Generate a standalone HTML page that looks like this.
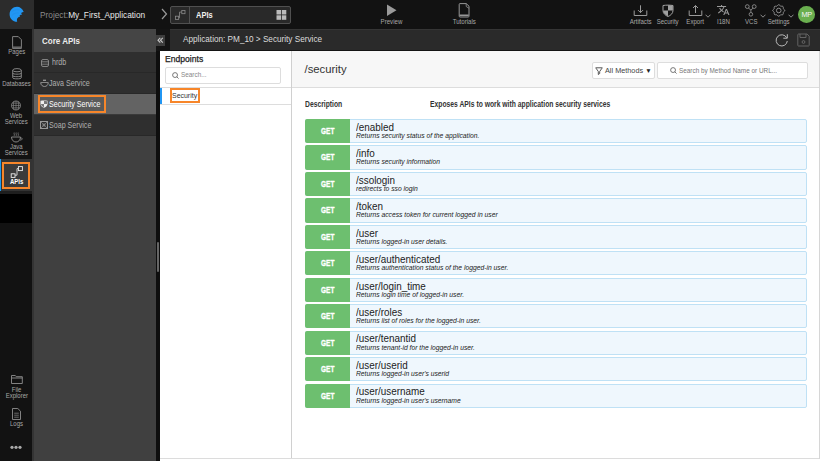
<!DOCTYPE html>
<html><head><meta charset="utf-8">
<style>
*{margin:0;padding:0;box-sizing:border-box}
html,body{width:820px;height:461px;overflow:hidden;background:#fff;font-family:"Liberation Sans",sans-serif}
.a{position:absolute}
#top{left:0;top:0;width:820px;height:29px;background:#121212}
#logo{left:0;top:0;width:34px;height:29px;background:#2c2c2c}
#side{left:0;top:29px;width:32px;height:432px;background:#121212}
.si{position:absolute;left:0.4px;width:32px;text-align:center;color:#a8a8a8;font-size:6.9px;line-height:6px}
#core{left:34px;top:29px;width:122px;height:432px;background:#404040}
#coreh{left:0;top:0;width:122px;height:22.5px;background:#454545;color:#ececec;font-weight:bold;font-size:9.2px;line-height:24px;padding-left:7.5px}
.row{position:absolute;left:0;width:122px;height:21px;background:#2f2f2f;border-bottom:1px solid #282828;color:#b0b0b0;font-size:8.2px;line-height:21px;padding-left:15px}
.row .c,.srow .c{transform:scaleX(.87)}
.row svg{position:absolute;left:6px;top:6px}
#strip{left:156px;top:29px;width:4px;height:432px;background:#0e0e0e}
#hdr{left:160px;top:29px;width:660px;height:22px;background:#2a2a2a;border-top:1px solid #353535;border-bottom:1px solid #141414}
#main{left:160px;top:51px;width:660px;height:410px;background:#fff}
.get{position:absolute;left:304.6px;width:502.7px;height:24.2px;background:#eff7fd;border:1px solid #bfe1f5;border-radius:2px}
.get .m{position:absolute;left:-1px;padding-left:1px;top:-1px;width:45.6px;height:24.2px;background:#6dbf6f;border-radius:2px 0 0 2px;color:#fff;font-weight:bold;font-size:8.5px;line-height:25px;text-align:center}
.get .m .cc{transform:scaleX(.76);-webkit-text-stroke:0.35px #fff}
.get .p{position:absolute;left:50.4px;top:1.8px;font-size:10.6px;line-height:11px;color:#222;transform:scaleX(.934);transform-origin:0 0;white-space:nowrap}
.get .d{position:absolute;left:50.4px;top:12px;font-size:7.75px;line-height:8px;color:#222;font-style:italic;transform:scaleX(.87);transform-origin:0 0;white-space:nowrap}
.c{display:inline-block;transform:scaleX(.87);transform-origin:0 0;white-space:nowrap}
.cc{display:inline-block;transform:scaleX(.87);transform-origin:50% 0;white-space:nowrap}
.lbl{color:#a8a8a8;font-size:7px;text-align:center;position:absolute;line-height:6px}
</style></head><body>
<div id="top" class="a"></div>
<div id="logo" class="a">
<svg class="a" style="left:4px;top:2px" width="26" height="24" viewBox="4 2 26 24"><path d="M23.7,12C22.5,8.8 20,6.8 17,6.8C13,6.8 9.6,10 9.6,14.2C9.6,18.3 12.6,21.8 17.2,21.8C16.8,20.5 16.8,19.2 17.4,18.3C18.2,17.4 19.2,16.8 20.2,16.6C19.9,16.2 19.7,15.8 19.6,15.5C20.3,14.8 21.2,14.5 22.2,14.4C21.7,13.9 21.3,13.4 21.1,12.9C21.9,12.3 22.8,12 23.7,12Z" fill="#2196f3"/><path d="M11.5,12C13.5,10 16.5,9.3 19.5,10M11.8,15.5C13.8,13.3 16.3,12.6 18.8,13" stroke="#1a80dc" stroke-width="0.5" fill="none" opacity="0.6"/></svg>
</div>
<div class="a" style="left:40px;top:10px;font-size:8.3px;line-height:10px;color:#8a8a8a;white-space:nowrap">Project:<span style="color:#e8e8e8">My_First_Application</span></div>
<svg class="a" style="left:160px;top:8px" width="8" height="12" viewBox="0 0 8 12"><path d="M2 1L6.5 6L2 11" stroke="#9a9a9a" stroke-width="1.2" fill="none"/></svg>
<div class="a" style="left:170px;top:6px;width:121px;height:18px;background:#292929;border:1px solid #505050;border-radius:2px"></div>
<div class="a" style="left:189px;top:7px;width:1px;height:16px;background:#505050"></div>
<svg class="a" style="left:175px;top:10px" width="11" height="10" viewBox="0 0 11 10"><rect x="6.8" y="0.5" width="3.2" height="3.2" fill="none" stroke="#8a8a8a" stroke-width="0.8"/><rect x="0.5" y="6.2" width="3.2" height="3.2" fill="none" stroke="#8a8a8a" stroke-width="0.8"/><path d="M3.7 7.8H4.5V2.1H6.8" stroke="#8a8a8a" fill="none" stroke-width="0.8"/></svg>
<div class="a" style="left:195.6px;top:9.5px;font-size:8.6px;line-height:10px;font-weight:bold;color:#f0f0f0"><span class="c">APIs</span></div>
<svg class="a" style="left:276px;top:10px" width="11" height="10" viewBox="0 0 11 10"><rect x="0.5" y="0" width="4.5" height="4.5" fill="#bbb"/><rect x="5.8" y="0" width="4.5" height="4.5" fill="#bbb"/><rect x="0.5" y="5.3" width="4.5" height="4.5" fill="#bbb"/><rect x="5.8" y="5.3" width="4.5" height="4.5" fill="#bbb"/></svg>

<!-- preview / tutorials -->
<svg class="a" style="left:386px;top:4px" width="11" height="13" viewBox="0 0 11 13"><path d="M1 0.5L10.5 6.3L1 12Z" fill="#9a9a9a"/></svg>
<div class="lbl" style="left:371.3px;top:18.8px;width:40px"><span class="cc">Preview</span></div>
<svg class="a" style="left:455px;top:3.2px" width="18" height="16" viewBox="455 2 18 16"><path d="M460 2.6H466.2L469 5.2V15.2Q469 16 468.2 16H460Q459.2 16 459.2 15.2V3.4Q459.2 2.6 460 2.6Z" fill="none" stroke="#979797" stroke-width="1"/><path d="M466.2 2.6V5.5L468.8 7.2" fill="none" stroke="#979797" stroke-width="0.8"/><path d="M459.5 14.3H468.7" stroke="#979797" stroke-width="1.6"/></svg>
<div class="lbl" style="left:444px;top:18.8px;width:40px"><span class="cc">Tutorials</span></div>

<!-- right toolbar -->
<svg class="a" style="left:633px;top:4px" width="15" height="13" viewBox="0 0 15 13"><path d="M1.2 6.5V11.5H13.8V6.5" fill="none" stroke="#9a9a9a" stroke-width="1"/><path d="M7.5 1.3V8.6M5 6.1L7.5 8.6L10 6.1" fill="none" stroke="#9a9a9a" stroke-width="1"/></svg>
<div class="lbl" style="left:620px;top:18.8px;width:41px"><span class="cc">Artifacts</span></div>
<svg class="a" style="left:662px;top:4px" width="12" height="13" viewBox="0 0 12 13"><path d="M1 1.5C4 1 8 1 11 1.5V6.5C11 9.5 8.5 11.5 6 12.5 3.5 11.5 1 9.5 1 6.5Z" fill="none" stroke="#a0a0a0" stroke-width="1"/><path d="M6 1.2V6.5H1.2V6.8C1.3 9 3 10.8 6 12.2V6.5H10.8V1.6C9 1.3 7.5 1.2 6 1.2Z" fill="#a0a0a0"/></svg>
<div class="lbl" style="left:648px;top:18.8px;width:40px"><span class="cc">Security</span></div>
<svg class="a" style="left:688px;top:4px" width="15" height="13" viewBox="0 0 15 13"><path d="M1.2 6.5V11.5H13.8V6.5" fill="none" stroke="#9a9a9a" stroke-width="1"/><path d="M7.5 9V1.5M5 4L7.5 1.5L10 4" fill="none" stroke="#9a9a9a" stroke-width="1"/></svg>
<div class="lbl" style="left:675px;top:18.8px;width:41px"><span class="cc">Export</span></div>
<svg class="a" style="left:704.5px;top:14px" width="6" height="4" viewBox="0 0 6 4"><path d="M0.5 0.7L3 3.2L5.5 0.7" fill="none" stroke="#9a9a9a" stroke-width="0.9"/></svg>
<svg class="a" style="left:717px;top:5.3px" width="12.5" height="10" viewBox="1 2 22 20" preserveAspectRatio="none"><path d="M12.87 15.07l-2.54-2.51.03-.03c1.74-1.94 2.98-4.17 3.710-6.53H17V4h-7V2H8v2H1v1.99h11.17C11.5 7.92 10.44 9.75 9 11.35 8.07 10.320 7.3 9.19 6.69 8h-2c.73 1.63 1.73 3.17 2.98 4.56l-5.09 5.02L4 19l5-5 3.11 3.11.76-2.04zM18.5 10h-2L12 22h2l1.12-3h4.75L21 22h2l-4.5-12zm-2.62 7l1.620-4.33L19.12 17h-3.24z" fill="#9a9a9a"/></svg>
<div class="lbl" style="left:703px;top:18.8px;width:40px"><span class="cc">I18N</span></div>
<svg class="a" style="left:742px;top:2px" width="16" height="16" viewBox="742 2 16 16"><circle cx="747.3" cy="6.6" r="1.9" fill="none" stroke="#9a9a9a" stroke-width="0.8"/><circle cx="754.2" cy="6.6" r="1.9" fill="none" stroke="#9a9a9a" stroke-width="0.8"/><circle cx="750.9" cy="14.3" r="1.8" fill="none" stroke="#9a9a9a" stroke-width="0.8"/><path d="M748.4 8.2L750.9 9.9L753.1 8.2M750.9 9.9V12.5" fill="none" stroke="#9a9a9a" stroke-width="0.8"/></svg>
<div class="lbl" style="left:731px;top:18.8px;width:40px"><span class="cc">VCS</span></div>
<svg class="a" style="left:759.5px;top:14px" width="6" height="4" viewBox="0 0 6 4"><path d="M0.5 0.7L3 3.2L5.5 0.7" fill="none" stroke="#9a9a9a" stroke-width="0.9"/></svg>
<svg class="a" style="left:772px;top:4px" width="13.5" height="13" viewBox="0 0 13.5 13"><path d="M6.75 0.7C7.7 0.7 8.2 2 8.6 2.2 9 2.4 10.4 1.9 11 2.5 11.6 3.1 11.1 4.4 11.3 4.8 11.5 5.2 12.8 5.6 12.8 6.5 12.8 7.4 11.5 7.8 11.3 8.2 11.1 8.6 11.6 9.9 11 10.5 10.4 11.1 9 10.6 8.6 10.8 8.2 11 7.7 12.3 6.75 12.3 5.8 12.3 5.3 11 4.9 10.8 4.5 10.6 3.1 11.1 2.5 10.5 1.9 9.9 2.4 8.6 2.2 8.2 2 7.8 0.7 7.4 0.7 6.5 0.7 5.6 2 5.2 2.2 4.8 2.4 4.4 1.9 3.1 2.5 2.5 3.1 1.9 4.5 2.4 4.9 2.2 5.3 2 5.8 0.7 6.75 0.7Z" fill="none" stroke="#9a9a9a" stroke-width="0.9"/><circle cx="6.75" cy="6.5" r="2.3" fill="none" stroke="#9a9a9a" stroke-width="0.9"/></svg>
<div class="lbl" style="left:759px;top:18.8px;width:40px"><span class="cc">Settings</span></div>
<svg class="a" style="left:787.5px;top:14px" width="6" height="4" viewBox="0 0 6 4"><path d="M0.5 0.7L3 3.2L5.5 0.7" fill="none" stroke="#9a9a9a" stroke-width="0.9"/></svg>
<div class="a" style="left:798.2px;top:6.3px;width:16.6px;height:16.6px;border-radius:50%;background:#6aaf4f;color:#f4f4f4;font-size:8px;line-height:18.6px;text-align:center;letter-spacing:-0.3px"><span class="cc" style="transform:scaleX(.92)">MP</span></div>

<!-- left sidebar -->
<div id="side" class="a">
</div>
<svg class="a" style="left:12px;top:35.5px" width="10" height="13" viewBox="0 0 10 13"><path d="M0.6 0.6H6.3L9.4 3.7V12.4H0.6Z" fill="none" stroke="#8e8e8e" stroke-width="0.9"/><path d="M0.6 11.2H9.4" stroke="#666" stroke-width="1.6"/></svg>
<div class="si" style="top:49px"><span class="cc">Pages</span></div>
<svg class="a" style="left:12px;top:68px" width="10" height="12" viewBox="0 0 10 12"><ellipse cx="5" cy="2.2" rx="4.3" ry="1.6" fill="none" stroke="#8e8e8e" stroke-width="0.9"/><path d="M0.7 2.2V9.8C0.7 11.2 9.3 11.2 9.3 9.8V2.2M0.7 5.2C0.7 6.5 9.3 6.5 9.3 5.2M0.7 7.7C0.7 9 9.3 9 9.3 7.7" fill="none" stroke="#8e8e8e" stroke-width="0.9"/></svg>
<div class="si" style="top:81px"><span class="cc">Databases</span></div>
<svg class="a" style="left:10.5px;top:100px" width="10" height="11" viewBox="0 0 10 11"><circle cx="5" cy="5.5" r="4.5" fill="none" stroke="#8e8e8e" stroke-width="0.8"/><path d="M0.6 5.5H9.4M1.2 3.2H8.8M1.2 7.8H8.8M5 1V10M3 1.4C2.2 4 2.2 7 3 9.6M7 1.4C7.8 4 7.8 7 7 9.6" fill="none" stroke="#8e8e8e" stroke-width="0.6"/></svg>
<div class="si" style="top:112.8px"><span class="cc">Web</span><br><span class="cc">Services</span></div>
<svg class="a" style="left:11px;top:132px" width="12" height="11" viewBox="0 0 12 11"><path d="M3.2 0.5C2.6 1.5 3.8 2.5 3.2 3.8M5.2 0.5C4.6 1.5 5.8 2.5 5.2 3.8M7.2 0.5C6.6 1.5 7.8 2.5 7.2 3.8" fill="none" stroke="#8e8e8e" stroke-width="0.7"/><path d="M0.5 5H9.5C9.5 8 7.5 10 5 10S0.5 8 0.5 5Z" fill="none" stroke="#8e8e8e" stroke-width="0.9"/><path d="M9.3 6H10.6C11.5 6 11.5 8.2 9.2 8.2" fill="none" stroke="#8e8e8e" stroke-width="0.8"/></svg>
<div class="si" style="top:143.8px"><span class="cc">Java</span><br><span class="cc">Services</span></div>
<div class="a" style="left:0;top:159px;width:32px;height:32px;background:#333"></div><div class="a" style="left:0;top:191px;width:32px;height:3px;background:#1e1e1e"></div>
<div class="a" style="left:0;top:159px;width:1.2px;height:32px;background:#1e9cf0"></div>
<div class="a" style="left:2px;top:161.5px;width:28px;height:27.5px;border:2px solid #f7862a;background:#3b3b3b"></div>
<svg class="a" style="left:10px;top:166px" width="13" height="12" viewBox="0 0 13 12"><rect x="8.4" y="0.6" width="4" height="4" fill="none" stroke="#eee" stroke-width="0.9"/><rect x="1.2" y="7.8" width="3.8" height="3.6" fill="none" stroke="#eee" stroke-width="0.9"/><path d="M5 9.2H7V2.6H8.4" fill="none" stroke="#eee" stroke-width="0.8"/></svg>
<div class="si" style="top:178.8px;color:#fff;font-weight:bold;font-size:6.9px"><span class="cc">APIs</span></div>
<div class="a" style="left:0;top:194px;width:33px;height:29px;background:#000"></div>
<svg class="a" style="left:10.5px;top:375px" width="12" height="9" viewBox="0 0 12 9"><path d="M0.5 0.5H4.3L5.3 1.7H11.3V8.5H0.5Z M0.5 3H11.3" fill="none" stroke="#8e8e8e" stroke-width="0.9"/></svg>
<div class="si" style="top:386.6px"><span class="cc">File</span><br><span class="cc">Explorer</span></div>
<svg class="a" style="left:12px;top:407.5px" width="9" height="12" viewBox="0 0 9 12"><path d="M0.5 0.5H5.8L8.5 3.2V11.5H0.5Z" fill="none" stroke="#8e8e8e" stroke-width="0.9"/><path d="M2.2 5.2H6.8M2.2 7.2H6.8M2.2 9.2H6.8" stroke="#8e8e8e" stroke-width="0.7"/></svg>
<div class="si" style="top:421px"><span class="cc">Logs</span></div>
<svg class="a" style="left:10px;top:445px" width="12" height="5" viewBox="0 0 12 5"><circle cx="2" cy="2.3" r="1.6" fill="#aaa"/><circle cx="6" cy="2.3" r="1.6" fill="#aaa"/><circle cx="10" cy="2.3" r="1.6" fill="#aaa"/></svg>
<div class="a" style="left:32px;top:29px;width:2px;height:432px;background:#343434"></div>

<!-- core apis panel -->
<div id="core" class="a">
 <div id="coreh" class="a"><span class="c">Core APIs</span></div>
 <div class="row" style="top:22.5px;padding-left:17.5px">
  <svg width="8" height="8" viewBox="0 0 8 8" style="left:7px;top:7px"><rect x="0.5" y="0.5" width="7" height="7" rx="1.5" fill="none" stroke="#999" stroke-width="0.8"/><path d="M0.5 2.8H7.5M0.5 5.2H7.5" stroke="#999" stroke-width="0.7"/></svg><span class="c">hrdb</span></div>
 <div class="row" style="top:43.5px">
  <svg width="9" height="8" viewBox="0 0 9 8" style="left:5.5px;top:6.8px"><path d="M3 1.3H6" fill="none" stroke="#9a9a9a" stroke-width="1.3"/><path d="M0.7 3.6H8.3C8.3 6 6.5 7.5 4.5 7.5S0.7 6 0.7 3.6Z" fill="none" stroke="#9a9a9a" stroke-width="0.9"/><path d="M2.6 4.8H6.4" stroke="#222" stroke-width="0.9"/></svg><span class="c">Java Service</span></div>
 <div class="row" style="top:64.5px;background:#636363;border-bottom-color:#3a3a3a;color:#fff"></div>
 <div class="a" style="left:4px;top:66px;width:68px;height:17.5px;border:2px solid #f7862a;background:#5a5a5a"></div>
 <svg class="a" style="left:6px;top:71px" width="8" height="8" viewBox="0 0 8 8"><path d="M0.5 0.8C3 0.3 5 0.3 7.5 0.8V4C7.5 6 5.5 7.2 4 7.7 2.5 7.2 0.5 6 0.5 4Z" fill="#eee"/><path d="M4 1V4H1V4.3C1.3 5.8 2.5 6.8 4 7.2V4H7V1.2C6 1 5 1 4 1Z" fill="#777"/></svg>
 <div class="a srow" style="left:15px;top:64.5px;height:21px;line-height:21px;font-size:8.2px;color:#fff"><span class="c">Security Service</span></div>
 <div class="row" style="top:85.5px">
  <svg width="8" height="8" viewBox="0 0 8 8"><rect x="0.5" y="0.5" width="7" height="7" fill="none" stroke="#999"/><path d="M0.5 0.5L7.5 7.5M7.5 0.5L0.5 7.5M2 4H6M4 2V6" stroke="#999" stroke-width="0.6"/></svg><span class="c">Soap Service</span></div>
</div>
<div id="strip" class="a"></div>
<div class="a" style="left:156px;top:35px;width:9px;height:10.8px;background:#3d3d3d;z-index:5"></div>
<svg class="a" style="left:157px;top:37px;z-index:6" width="7" height="7" viewBox="0 0 7 7"><path d="M3.3 0.8L1 3.2L3.3 5.6M5.8 0.8L3.5 3.2L5.8 5.6" fill="none" stroke="#c8c8c8" stroke-width="1.1"/></svg>
<div class="a" style="left:156.5px;top:242px;width:2.5px;height:30px;background:#666;border-radius:1px"></div>

<!-- header bar -->
<div id="hdr" class="a"></div>
<div class="a" style="left:156px;top:29px;width:14px;height:22px;background:#141414"></div>
<div class="a" style="left:183px;top:34px;font-size:8.2px;line-height:11px;color:#dcdcdc;white-space:nowrap">Application: PM_10 &gt; Security Service</div>
<svg class="a" style="left:775px;top:33px" width="14" height="14" viewBox="0 0 14 14"><path d="M11.6 4.6A5.6 5.6 0 1 0 12.3 8" fill="none" stroke="#c8c8c8" stroke-width="0.9"/><path d="M12.3 1.2V5.2H8.3" fill="none" stroke="#c8c8c8" stroke-width="0.9"/></svg>
<svg class="a" style="left:797px;top:33px" width="13" height="14" viewBox="0 0 13 14"><path d="M1.5 1H10L12.2 3.2V12.3Q12.2 13 11.5 13H1.5Q0.8 13 0.8 12.3V1.7Q0.8 1 1.5 1Z" fill="none" stroke="#6a6a6a" stroke-width="0.9"/><path d="M3 1V4.5H9V1" fill="none" stroke="#6a6a6a" stroke-width="0.9"/><circle cx="6.5" cy="9" r="1.4" fill="none" stroke="#6a6a6a" stroke-width="0.9"/></svg>

<!-- main white -->
<div id="main" class="a"></div>
<div class="a" style="left:160px;top:87px;width:131px;height:1px;background:#ddd"></div>
<div class="a" style="left:165px;top:54px;font-size:8.6px;line-height:11px;color:#222;-webkit-text-stroke:0.25px #222">Endpoints</div>
<div class="a" style="left:165px;top:66.5px;width:115.5px;height:17px;border:1px solid #ddd;border-radius:2px"></div>
<svg class="a" style="left:171.5px;top:71.5px" width="7" height="7" viewBox="0 0 8 8"><circle cx="3.5" cy="3.5" r="2.8" fill="none" stroke="#555" stroke-width="0.9"/><path d="M5.5 5.5L7.5 7.5" stroke="#555" stroke-width="0.9"/></svg>
<div class="a" style="left:181px;top:70px;font-size:6.4px;line-height:9px;color:#888">Search...</div>
<div class="a" style="left:160px;top:104px;width:131px;height:1px;background:#ddd"></div>
<div class="a" style="left:160px;top:88px;width:1.5px;height:16px;background:#2196f3"></div>
<div class="a" style="left:170.2px;top:88.2px;width:29.6px;height:14.8px;border:2px solid #f7862a"></div>
<div class="a" style="left:171.8px;top:90.6px;font-size:8.1px;line-height:9px;color:#333"><span class="c" style="transform:scaleX(.86)">Security</span></div>
<div class="a" style="left:291px;top:51px;width:1px;height:407px;background:#d0d0d0"></div>
<div class="a" style="left:160px;top:458px;width:660px;height:1px;background:#dcdcdc"></div>
<div class="a" style="left:819px;top:51px;width:1px;height:408px;background:#d6d6d6"></div>

<div class="a" style="left:292px;top:51px;width:527px;height:37px;background:#f7f7f7;border-bottom:1px solid #ddd"></div>
<div class="a" style="left:304.5px;top:62px;font-size:11.3px;line-height:14px;color:#333">/security</div>
<div class="a" style="left:592px;top:62px;width:62.5px;height:16.5px;border:1px solid #ddd;border-radius:2px;background:#fff"></div>
<svg class="a" style="left:595px;top:67px" width="8" height="8" viewBox="0 0 8 8"><path d="M0.5 0.8H7.5M1 1.2L3.3 4.5V7.5L4.7 6.5V4.5L7 1.2" fill="none" stroke="#444" stroke-width="0.9"/></svg>
<div class="a" style="left:605px;top:66px;font-size:7.3px;line-height:9px;color:#444;white-space:nowrap">All Methods <span style="font-size:6.5px;color:#222">▼</span></div>
<div class="a" style="left:657px;top:62px;width:150.5px;height:17px;border:1px solid #ddd;border-radius:2px;background:#fff"></div>
<svg class="a" style="left:670px;top:67px" width="7" height="7" viewBox="0 0 8 8"><circle cx="3.5" cy="3.5" r="2.8" fill="none" stroke="#555" stroke-width="0.9"/><path d="M5.5 5.5L7.5 7.5" stroke="#555" stroke-width="0.9"/></svg>
<div class="a" style="left:679px;top:66px;font-size:6.4px;line-height:9px;color:#777;white-space:nowrap">Search by Method Name or URL...</div>

<div class="a" style="left:305px;top:100px;font-size:8.4px;line-height:9px;color:#333;font-weight:bold"><span class="c" style="transform:scaleX(.808)">Description</span></div>
<div class="a" style="left:430px;top:100px;font-size:8.4px;line-height:9px;color:#333;font-weight:bold;white-space:nowrap"><span class="c" style="transform:scaleX(.808)">Exposes APIs to work with application security services</span></div>

<div class="get" style="top:119.00px"><div class="m"><span class="cc">GET</span></div><div class="p">/enabled</div><div class="d">Returns security status of the application.</div></div>
<div class="get" style="top:145.46px"><div class="m"><span class="cc">GET</span></div><div class="p">/info</div><div class="d">Returns security information</div></div>
<div class="get" style="top:171.92px"><div class="m"><span class="cc">GET</span></div><div class="p">/ssologin</div><div class="d">redirects to sso login</div></div>
<div class="get" style="top:198.38px"><div class="m"><span class="cc">GET</span></div><div class="p">/token</div><div class="d">Returns access token for current logged in user</div></div>
<div class="get" style="top:224.84px"><div class="m"><span class="cc">GET</span></div><div class="p">/user</div><div class="d">Returns logged-in user details.</div></div>
<div class="get" style="top:251.30px"><div class="m"><span class="cc">GET</span></div><div class="p">/user/authenticated</div><div class="d">Returns authentication status of the logged-in user.</div></div>
<div class="get" style="top:277.76px"><div class="m"><span class="cc">GET</span></div><div class="p">/user/login_time</div><div class="d">Returns login time of logged-in user.</div></div>
<div class="get" style="top:304.22px"><div class="m"><span class="cc">GET</span></div><div class="p">/user/roles</div><div class="d">Returns list of roles for the logged-in user.</div></div>
<div class="get" style="top:330.68px"><div class="m"><span class="cc">GET</span></div><div class="p">/user/tenantid</div><div class="d">Returns tenant-id for the logged-in user.</div></div>
<div class="get" style="top:357.14px"><div class="m"><span class="cc">GET</span></div><div class="p">/user/userid</div><div class="d">Returns logged-in user's userid</div></div>
<div class="get" style="top:383.60px"><div class="m"><span class="cc">GET</span></div><div class="p">/user/username</div><div class="d">Returns logged-in user's username</div></div>
</body></html>
